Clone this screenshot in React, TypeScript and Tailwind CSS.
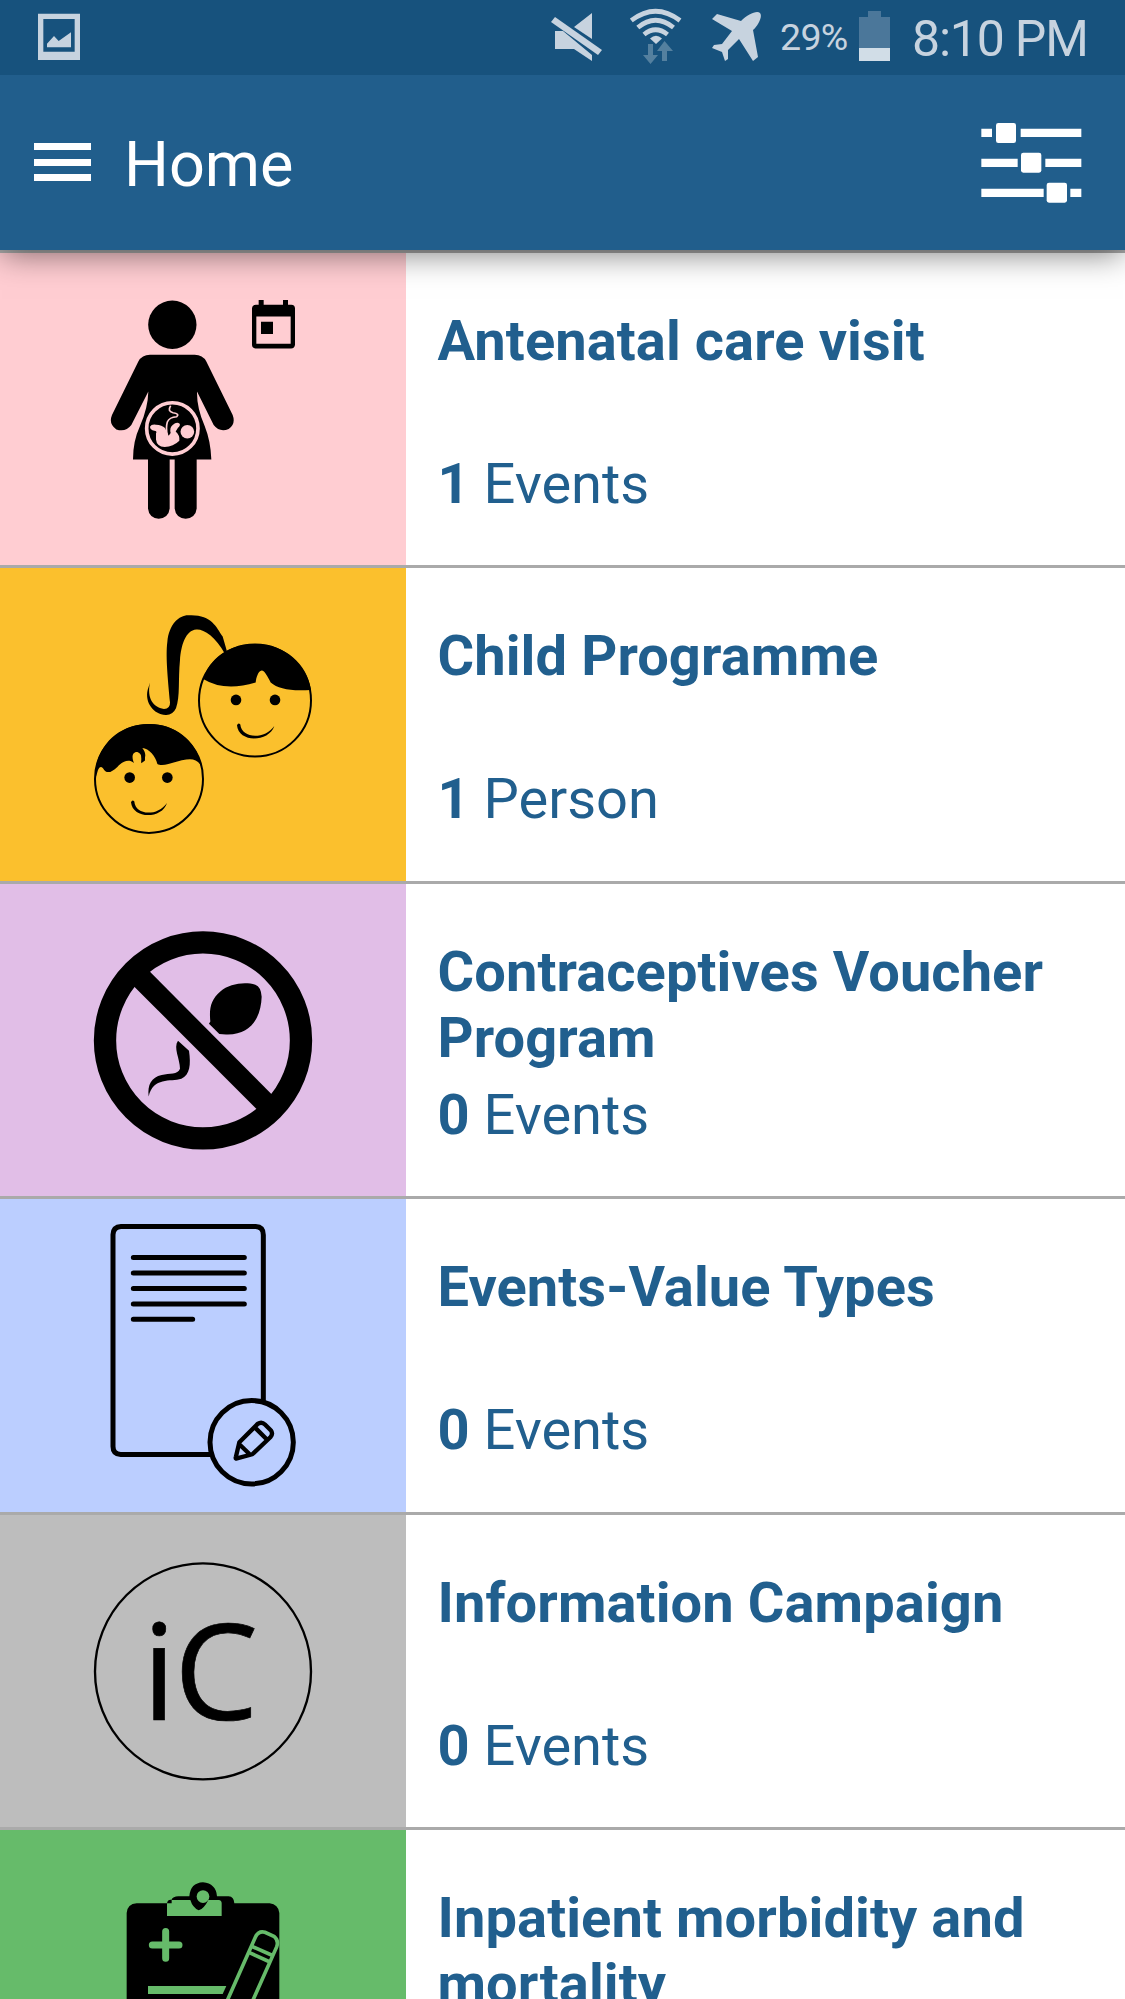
import type { ReactNode } from "react";

function PictureIcon() {
  return (
    <svg className="ml-[38px] mt-[13px] h-[48px] w-[42px] shrink-0" viewBox="0 0 126 144" fill="#c7d3df">
      <path fillRule="evenodd" d="M0 2H126V141H0ZM16 18V116H110V18Z" />
      <path d="M27 103V92L48 69L62 84L99 58V103Z" />
    </svg>
  );
}

function MuteIcon() {
  return (
    <svg className="mt-[12px] h-[52px] w-[52px] shrink-0" viewBox="0 0 52 52" fill="#c7d3df">
      <path d="M23 15L41 1V27Z M4 19V37H23L41 49V43L12 19Z" />
      <path d="M4 5L51 38L47 43L0 10Z" />
    </svg>
  );
}

function WifiIcon() {
  return (
    <svg className="ml-[27px] mt-[8px] h-[58px] w-[53px] shrink-0" viewBox="0 0 53 58">
      <g fill="none" stroke="#c7d3df" strokeWidth="4.7">
        <path d="M1.3 12.5Q25.500 -6 50 12.5" />
        <path d="M7.8 19.5Q25.500 5 43.500 19.5" />
        <path d="M14 26.5Q25.500 17 37.500 26.5" />
      </g>
      <path d="M20 30.5Q26 25 32 30.5L26 36Z" fill="#c7d3df" />
      <g fill="#54809f">
        <path d="M18 36H23V47H28L20.5 56L13 47H18Z" />
        <path d="M32 53H37V43H43L34.5 33L27 43H32Z" />
      </g>
    </svg>
  );
}

function PlaneIcon() {
  return (
    <svg className="ml-[27px] mt-[11px] h-[52px] w-[52px] shrink-0" viewBox="0 0 52 52" fill="#c7d3df">
      <path d="M31 10L7 3L2 8L22 20L12 33L4 34L2 37L12 41L15 50L18 48V39L29 28L43 50L48 46L43 19C48 15 53 5 50 2C47 -1 38 3 31 10Z" />
    </svg>
  );
}

function StatusBar() {
  return (
    <div className="relative z-20 flex h-[75px] shrink-0 items-start bg-[#17527d] text-[#c7d3df]">
      <PictureIcon />
      <div className="flex-1" />
      <MuteIcon />
      <WifiIcon />
      <PlaneIcon />
      <span className="ml-[18px] mt-[15px] w-[71px] whitespace-nowrap text-[37.5px] leading-[44px] tracking-[-0.7px]">29%</span>
      <svg className="ml-[8px] mt-[11px] h-[50px] w-[31px] shrink-0" viewBox="0 0 31 50">
        <path d="M0 6H9V0H22V6H31V37H0Z" fill="#4b779a" />
        <path d="M0 37H31V50H0Z" fill="#d1dde7" />
      </svg>
      <span className="ml-[22px] mt-[10px] w-[213px] whitespace-nowrap text-[50px] leading-[58px] tracking-[-1.2px]">8:10 PM</span>
    </div>
  );
}

function Header() {
  return (
    <div className="relative z-10 flex h-[174.6px] shrink-0 items-start bg-[#215e8c] shadow-[0_6px_30px_-2px_rgba(0,0,0,0.5)]">
      <div className="ml-[34px] mt-[68px] flex w-[57px] flex-col gap-[8.5px]">
        <div className="h-[7px] bg-white" />
        <div className="h-[7px] bg-white" />
        <div className="h-[7px] bg-white" />
      </div>
      <h1 className="ml-[33px] mt-[53px] text-[63px] leading-[74px] text-white">Home</h1>
      <div className="flex-1" />
      <svg className="mr-[43px] mt-[47px] h-[82px] w-[102px]" viewBox="0 0 306 246" fill="white">
        <path d="M4 20H36V45H4ZM122 20H304V45H122ZM4 110H113V135H4ZM196 110H304V135H196ZM4 200H191V225H4ZM271 200H304V225H271Z" />
        <rect x="48" y="3" width="60" height="60" rx="7" />
        <rect x="123" y="92" width="61" height="60" rx="7" />
        <rect x="200" y="182" width="61" height="60" rx="7" />
      </svg>
    </div>
  );
}

const pregnant = (
  <g transform="translate(90 27.4) scale(.33333)">
    <circle cx="247" cy="133" r="72.5" />
    <path d="M180 223H314Q338 223 349 243L428 404Q438 431 416 446Q389 457 371 434L321 333Q320 382 344 437Q362 482 364 537H320V684Q317 712 287 715Q257 712 254 684V537H239V684Q236 712 206 715Q177 712 174 684V537H129Q129 482 150 437Q174 382 175 333L124 434Q107 456 79 447Q55 431 66 404L145 243Q156 223 180 223Z" />
    <circle cx="247" cy="444" r="77" fill="none" stroke="#ffcdd2" strokeWidth="11" />
    <circle cx="292" cy="454" r="20.500" fill="#ffcdd2" />
    <path d="M180 439Q184 431 198 433Q216 434 225 443Q232 458 236 466L242 458Q238 442 248 434Q260 423 269 430Q272 435 264 442L257 453Q270 464 268 481Q250 499 224 500Q200 498 198 477V459Q202 452 193 451Q180 448 180 439Z" fill="#ffcdd2" />
    <path d="M242 376Q231 393 249 397Q270 400 260 409Q238 410 232 425Q227 442 232 465" fill="none" stroke="#ffcdd2" strokeWidth="5" />
    <path fillRule="evenodd" d="M506 59H521V73H579V59H594V73H604Q615 74 615 84V193Q614 204 603 204H496Q486 203 486 193V84Q487 73 498 73H506ZM499 108V190H602V108ZM513 124H549V161H513Z" />
  </g>
);

const children = (
  <g transform="translate(80 31.9) scale(.33333)">
    <g fill="none" stroke="#000" strokeWidth="6">
      <circle cx="525" cy="302" r="168" />
      <circle cx="207" cy="537" r="162" />
    </g>
    <path d="M371 238C385 177 448 132 525 132C615 132 682 192 693 270Q605 277 572 248C563 231 554 212 545 212C535 214 529 231 527 248Q433 276 371 238Z" />
    <path d="M435 162C406 109 370 87 349 89C317 91 303 137 300 180C294 241 301 288 288 325Q278 346 257 345C220 343 194 307 203 270L210 248C200 294 219 323 252 327Q271 326 270 307C265 251 256 169 262 126C267 72 298 46 324 46C393 42 408 79 428 110L441 155Z" />
    <path d="M45 540C43 439 115 372 207 372C289 372 351 424 366 503Q353 473 319 479C287 483 250 503 232 492C228 470 206 445 187 444C202 463 196 479 184 489C183 477 188 457 171 456C154 456 156 477 162 489C144 475 124 487 112 501C93 519 79 523 69 505Q60 495 54 510Z" />
    <path d="M175 458Q191 465 184 490L195 482Q197 455 183 446Z" />
    <circle cx="468" cy="300" r="16" /><circle cx="585" cy="300" r="16" />
    <circle cx="149" cy="533" r="16" /><circle cx="262" cy="533" r="16" />
    <path d="M471 376Q475 367 481 374C484 416 554 420 583 378C566 428 475 429 471 376Z" />
    <path d="M153 607Q157 598 163 605C166 647 232 650 261 609C246 658 158 658 153 607Z" />
  </g>
);

const contraceptive = (
  <g transform="translate(80 31.4) scale(.33333)">
    <circle cx="369" cy="375" r="294" fill="none" stroke="#000" strokeWidth="67" />
    <path d="M154 205L201 160L583 545L538 589Z" />
    <path d="M387 325L391 318C387 278 393 252 421 228C448 205 494 198 526 208Q543 214 545 244C543 306 513 360 438 357L418 356Z" />
    <path d="M294 376L327 406C333 448 330 478 304 490C271 500 220 484 206 543C202 508 214 486 245 479C269 472 293 479 300 460C300 430 279 397 294 376Z" />
  </g>
);

const document = (
  <g transform="translate(90 10.9) scale(.33333)" fill="none" stroke="#000" strokeWidth="15" strokeLinecap="round" strokeLinejoin="round">
    <path d="M363 734H92Q69 733 69 710V74Q70 51 93 50H497Q520 51 520 75V574" strokeLinecap="butt" />
    <path d="M130 143H463M130 189H463M130 236H463M130 282H463M130 328H308" />
    <circle cx="485" cy="697" r="125" />
    <path d="M448 697L503 642Q515 634 525 644L543 662Q550 672 541 682L487 733L438 746Q436 745 438 740ZM448 703L479 733M496 654L530 688" strokeWidth="13" />
  </g>
);

const campaign = (
  <g transform="translate(80 35.4) scale(.33333)">
    <circle cx="369" cy="363" r="324" fill="none" stroke="#000" strokeWidth="7" />
    <text x="187 282" y="510" fontSize="402" fontFamily="Open Sans, sans-serif" stroke="#000" strokeWidth="2">iC</text>
  </g>
);

const clipboard = (
  <g transform="translate(100 -10.1) scale(.33333)">
    <path d="M80 279Q82 252 110 250H201Q203 239 214 240Q219 229 235 229H268Q271 189 309 187Q348 191 351 229H386Q402 230 403 250H509Q535 253 538 279V760H80Z" />
    <path d="M201 250H215V240H271Q278 263 296 271Q311 268 325 240H356Q365 241 365 250V288H201Z" fill="#66bb6a" />
    <circle cx="309" cy="230" r="19" fill="#66bb6a" />
    <path d="M197 335V415M157 375H237" stroke="#66bb6a" strokeWidth="21" strokeLinecap="round" />
    <path d="M144 498H379L368 522H144Z" fill="#66bb6a" />
    <path d="M368 573L467 350Q476 332 495 337L523 350Q537 362 530 381L437 590M455 379L516 406M450 399L505 424" fill="none" stroke="#66bb6a" strokeWidth="11" />
  </g>
);

type Program = { title: string; count: number; unit: string; tile: string; art: ReactNode };

const programs: Program[] = [
  { title: "Antenatal care visit", count: 1, unit: "Events", tile: "bg-[#ffcdd2]", art: pregnant },
  { title: "Child Programme", count: 1, unit: "Person", tile: "bg-[#fbc02d]", art: children },
  { title: "Contraceptives Voucher Program", count: 0, unit: "Events", tile: "bg-[#e1bee7]", art: contraceptive },
  { title: "Events-Value Types", count: 0, unit: "Events", tile: "bg-[#bbceff]", art: document },
  { title: "Information Campaign", count: 0, unit: "Events", tile: "bg-[#bdbdbd]", art: campaign },
  { title: "Inpatient morbidity and mortality", count: 0, unit: "Events", tile: "bg-[#66bb6a]", art: clipboard },
];

function ProgramRow({ title, count, unit, tile, art }: Program) {
  return (
    <li className="flex h-[315.5px] shrink-0 flex-col">
      <div className="h-[3px] shrink-0 bg-[#aaaaaa]" />
      <div className="flex h-[312.5px]">
        <div className={`w-[406px] shrink-0 ${tile}`}>
          <svg className="block h-[312.5px] w-[406px]" viewBox="0 0 406 312.5">{art}</svg>
        </div>
        <div className="flex-1 pl-[31.5px] pr-[50px] pt-[55px] text-[56px] leading-[66px] text-[#215f8e]">
          <h2 className="h-[132px] font-bold tracking-[0.1px]">{title}</h2>
          <p className="mt-[11px]"><b className="font-bold">{count}</b> {unit}</p>
        </div>
      </div>
    </li>
  );
}

export default function App() {
  return (
    <div className="flex h-[1999px] w-[1125px] flex-col overflow-hidden bg-white font-['Roboto',sans-serif]">
      <StatusBar />
      <Header />
      <ul className="flex flex-col">
        {programs.map((p) => <ProgramRow key={p.title} {...p} />)}
      </ul>
    </div>
  );
}
